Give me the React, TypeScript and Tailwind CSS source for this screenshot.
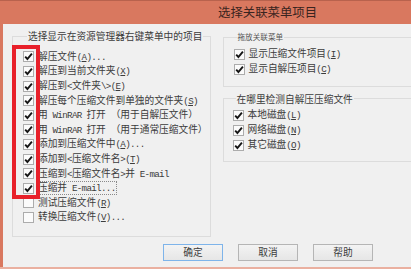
import React from 'react'

type Item = { t: string; c: boolean; focus?: boolean }

const MENU_ITEMS: Item[] = [
  { t: '解压文件(&A)...', c: true },
  { t: '解压到当前文件夹(&X)', c: true },
  { t: '解压到<文件夹\\>(&E)', c: true },
  { t: '解压每个压缩文件到单独的文件夹(&S)', c: true },
  { t: '用 WinRAR 打开 （用于自解压文件）', c: true },
  { t: '用 WinRAR 打开 （用于通常压缩文件）', c: true },
  { t: '添加到压缩文件中(&A)...', c: true },
  { t: '添加到<压缩文件名>(&T)', c: true },
  { t: '压缩到<压缩文件名>并 E-mail', c: true },
  { t: '压缩并 E-mail...', c: true, focus: true },
  { t: '测试压缩文件(&R)', c: false },
  { t: '转换压缩文件(&V)...', c: false },
]

const DRAG_ITEMS: Item[] = [
  { t: '显示压缩文件项目(&I)', c: true },
  { t: '显示自解压项目(&C)', c: true },
]

const DISK_ITEMS: Item[] = [
  { t: '本地磁盘(&L)', c: true },
  { t: '网络磁盘(&N)', c: true },
  { t: '其它磁盘(&O)', c: true },
]

// ascii runs get a narrow mono face, like SimSun's half-width latin
const MONO = "[font-family:'Liberation_Mono',monospace] text-[0.95em] tracking-[-0.074em]"

function Label({ text }: { text: string }) {
  const parts: React.ReactNode[] = []
  const re = /&(.)|([\x20-\x25\x27-\x7e]+)|([^\x20-\x7e]+)/g
  let m: RegExpExecArray | null
  let k = 0
  while ((m = re.exec(text))) {
    if (m[1]) {
      parts.push(
        <span key={k++} className={`${MONO} underline underline-offset-1`}>
          {m[1]}
        </span>
      )
    } else if (m[2]) {
      parts.push(
        <span key={k++} className={`${MONO} whitespace-pre`}>
          {m[2]}
        </span>
      )
    } else {
      parts.push(<span key={k++}>{m[3]}</span>)
    }
  }
  return <>{parts}</>
}

function Check({ checked }: { checked: boolean }) {
  return (
    <span className="w-[11px] h-[11px] shrink-0 border border-[#acacac] bg-[#fbfbfb] flex items-center justify-center">
      {checked && (
        <svg width="9" height="9" viewBox="0 0 9 9">
          <path d="M1.2 4.6 L3.4 7 L7.9 1.6" fill="none" stroke="#151515" strokeWidth="1.9" />
        </svg>
      )}
    </span>
  )
}

function Row({ item, h }: { item: Item; h: string }) {
  return (
    <div className={`flex items-center gap-[2px] whitespace-nowrap leading-none ${h}`}>
      <Check checked={item.c} />
      <span className={item.focus ? 'border border-dotted border-[#8a8a8a] px-[1px] py-[1px]' : 'px-[2px]'}>
        <Label text={item.t} />
      </span>
    </div>
  )
}

export default function App() {
  return (
    <div className="w-[411px] h-[269px] overflow-hidden bg-[#d9785f] relative flex flex-col text-[#3c3c3c] [font-family:'Noto_Sans_CJK_SC',sans-serif]">
      <div className="h-[24px] shrink-0 border-t border-[#b8624d] flex items-center pl-[218px] text-[12.4px] text-[#3a2420] leading-none">
        选择关联菜单项目
      </div>

      <div className="ml-[3px] h-[243px] shrink-0 bg-[#f0f0f0] flex flex-col text-[9.7px]">
        <div className="flex">
          <fieldset className="ml-[9px] mt-[6px] w-[279px] h-[207px] border border-[#dcdcdc] pl-[10px] pt-[7.7px]">
            <legend className="ml-[4px] px-[1px] leading-[12px]">选择显示在资源管理器右键菜单中的项目</legend>
            {MENU_ITEMS.map((it, i) => (
              <Row key={i} item={it} h="h-[14.6px]" />
            ))}
          </fieldset>

          <div className="ml-[12px] w-[200px] shrink-0 flex flex-col">
            <fieldset className="mt-[7px] border border-[#dcdcdc] pl-[10px] pt-[3.5px] pb-[9px]">
              <legend className="ml-[3px] px-[1px] leading-[12px] text-[7.6px] text-[#555]">拖放关联菜单</legend>
              {DRAG_ITEMS.map((it, i) => (
                <Row key={i} item={it} h="h-[15px]" />
              ))}
            </fieldset>
            <fieldset className="mt-[6px] border border-[#dcdcdc] pl-[9px] pt-[3px] pb-[8px]">
              <legend className="ml-[3px] px-[1px] leading-[12px] whitespace-nowrap">在哪里检测自解压压缩文件</legend>
              {DISK_ITEMS.map((it, i) => (
                <Row key={i} item={it} h="h-[15px]" />
              ))}
            </fieldset>
          </div>
        </div>

        <div className="flex gap-[15px] pl-[160px] mt-[7px]">
          <button className="w-[60px] h-[17px] border border-[#7eb4ea] bg-linear-to-b from-[#f3f3f3] to-[#e6e6e6] leading-none">确定</button>
          <button className="w-[60px] h-[17px] border border-[#b5b5b5] bg-linear-to-b from-[#f3f3f3] to-[#e6e6e6] leading-none">取消</button>
          <button className="w-[60px] h-[17px] border border-[#b5b5b5] bg-linear-to-b from-[#f3f3f3] to-[#e6e6e6] leading-none">帮助</button>
        </div>
      </div>

      <div className="flex-1 bg-[#eab0a0]" />

      {/* red highlight drawn over the checkbox column */}
      <div className="absolute left-[12px] top-[45px] w-[28px] h-[154px] border-[4px] border-[#e8202a] pointer-events-none" />
    </div>
  )
}
